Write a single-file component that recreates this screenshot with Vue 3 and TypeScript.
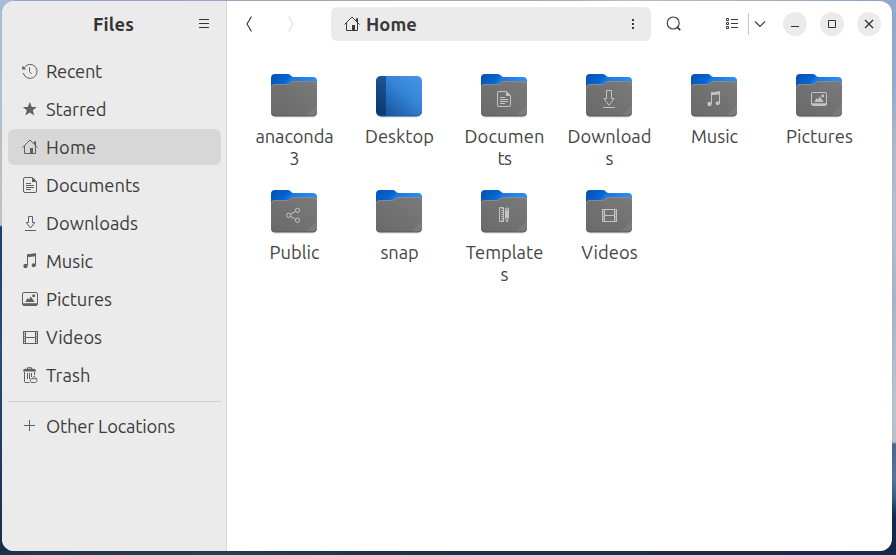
<script setup lang="ts">
import type { Directive } from 'vue'

interface Place { label: string; icon: string; width: number; active?: boolean }
interface Line { text: string; width: number }
interface Item { icon: string; kind: 'folder' | 'desktop'; lines: Line[] }

const places: Place[] = [
  { label: 'Recent', icon: 'recent', width: 56 },
  { label: 'Starred', icon: 'star', width: 60.5 },
  { label: 'Home', icon: 'home', width: 50.5, active: true },
  { label: 'Documents', icon: 'document', width: 94 },
  { label: 'Downloads', icon: 'download', width: 92 },
  { label: 'Music', icon: 'music', width: 47 },
  { label: 'Pictures', icon: 'picture', width: 66 },
  { label: 'Videos', icon: 'video', width: 56 },
  { label: 'Trash', icon: 'trash', width: 44.5 },
]

const items: Item[] = [
  { icon: '', kind: 'folder', lines: [{ text: 'anaconda', width: 78 }, { text: '3', width: 10 }] },
  { icon: '', kind: 'desktop', lines: [{ text: 'Desktop', width: 69 }] },
  { icon: 'document', kind: 'folder', lines: [{ text: 'Documen', width: 80 }, { text: 'ts', width: 14 }] },
  { icon: 'download-large', kind: 'folder', lines: [{ text: 'Download', width: 84 }, { text: 's', width: 8 }] },
  { icon: 'music', kind: 'folder', lines: [{ text: 'Music', width: 47 }] },
  { icon: 'picture', kind: 'folder', lines: [{ text: 'Pictures', width: 67 }] },
  { icon: 'share', kind: 'folder', lines: [{ text: 'Public', width: 50 }] },
  { icon: '', kind: 'folder', lines: [{ text: 'snap', width: 38 }] },
  { icon: 'template', kind: 'folder', lines: [{ text: 'Template', width: 77.5 }, { text: 's', width: 8 }] },
  { icon: 'video', kind: 'folder', lines: [{ text: 'Videos', width: 56.5 }] },
]

// Spreads a label's letters so that it takes the given width.
const vFit: Directive<HTMLElement, number> = {
  mounted(el, { value }) {
    const count = (el.textContent ?? '').trim().length
    if (count < 2) return
    const natural = el.getBoundingClientRect().width
    el.style.letterSpacing = `${((value - natural) / count).toFixed(3)}px`
  },
}
</script>

<template>
  <svg class="defs" width="0" height="0" aria-hidden="true">
    <defs>
      <linearGradient id="tab" x1="0" y1="0" x2="1" y2="0.3">
        <stop offset="0" stop-color="#0550ae" /><stop offset="0.42" stop-color="#0766d2" />
        <stop offset="0.5" stop-color="#1b78e0" /><stop offset="1" stop-color="#2f8cf0" />
      </linearGradient>
      <linearGradient id="front" x1="0" y1="1" x2="1" y2="0">
        <stop offset="0" stop-color="#696969" /><stop offset="1" stop-color="#7a7a7a" />
      </linearGradient>
      <linearGradient id="desk" x1="0" y1="1" x2="1" y2="0">
        <stop offset="0" stop-color="#0d4a8c" /><stop offset="0.6" stop-color="#3584d8" /><stop offset="1" stop-color="#4596e8" />
      </linearGradient>
      <symbol id="i-recent" viewBox="0 0 16 16">
        <path d="M2.100 4.800A7 7 0 1 1 1.300 10" fill="none" stroke="currentColor" />
        <path d="M7.500 4.500v4l2 2.500" fill="none" stroke="currentColor" />
        <path d="M0.200 2.500v4h4z" fill="currentColor" />
      </symbol>
      <symbol id="i-star" viewBox="0 0 16 16">
        <path d="M7.800 1l2 5h5l-4 3.300 1.500 5.200-4.500-3.100-4.500 3.100 1.500-5.200-4-3.300h5z" fill="currentColor" />
      </symbol>
      <symbol id="i-home" viewBox="0 0 16 16">
        <path d="M.5 8.500L8 1l7.500 7.500M2.500 7v7.500h11V7M12.500 5V2.500h1V6" fill="none" stroke="currentColor" />
        <path d="M8 9h3v6H8z" fill="currentColor" />
      </symbol>
      <symbol id="i-document" viewBox="0 0 16 16">
        <path d="M3 .5h7.500l4 4V14a1.500 1.500 0 0 1-1.500 1.500H3A1.500 1.500 0 0 1 1.500 14V2A1.500 1.500 0 0 1 3 .5z" fill="none" stroke="currentColor" />
        <path d="M10 .5V5h4.500z" fill="currentColor" />
        <path d="M4 6.500h5M4 8.500h8M4 10.500h8M4 12.500h5" stroke="currentColor" />
      </symbol>
      <symbol id="i-download" viewBox="0 0 16 16">
        <path d="M6.500 1.500h4v6h2.200l-4.200 5.500-4.200-5.500h2.200zM3 15.500h11" fill="none" stroke="currentColor" />
      </symbol>
      <symbol id="i-download-large" viewBox="0 0 16 16" overflow="visible">
        <path d="M5.500-.5h5v8h2.500L8 14.500 3 7.500h2.500zM2 16.500h12" fill="none" stroke="currentColor" />
      </symbol>
      <symbol id="i-music" viewBox="0 0 16 16">
        <path d="M5.500 12.500V2.500l8-1.500v11" fill="none" stroke="currentColor" />
        <path d="M5 1.300L14 .2v3L5 4.300z" fill="currentColor" />
        <circle cx="3.500" cy="13" r="2.200" fill="currentColor" /><circle cx="11.700" cy="12.300" r="2" fill="currentColor" />
      </symbol>
      <symbol id="i-picture" viewBox="0 0 16 16">
        <rect x=".5" y="1.500" width="15" height="13" rx="1.500" fill="none" stroke="currentColor" />
        <path d="M1 12.300h14v1.700H1zM3.300 11l2.300-4 1.400 1.600 1.700-3.100 4 5.500z" fill="currentColor" />
        <circle cx="11.700" cy="4.700" r="1.500" fill="currentColor" />
      </symbol>
      <symbol id="i-video" viewBox="0 0 16 16">
        <path d="M3.500 2v13M13.500 2v13M3 2.500h11M3 8.500h11M3 14.500h11" stroke="currentColor" />
        <path d="M1.500 2v13M15.500 2v13" stroke="currentColor" />
        <path d="M2.500 2v13M14.500 2v13" stroke="currentColor" stroke-dasharray="1 1.400" />
      </symbol>
      <symbol id="i-trash" viewBox="0 0 16 16">
        <path d="M5.500 2V.7h4V2M2.500 5v9.500a1 1 0 0 0 1 1h4M12.500 5v3M5.500 6v6M7.500 6v6M9.500 6v4" fill="none" stroke="currentColor" />
        <path d="M1 4.500q0-2.700 2-2.700h9q2 0 2 2.700z" fill="currentColor" />
        <path d="M9.500 11.700h5.300q.9 3.600-1.300 3.800H10q-2.600-.2-1-3.800zM10.300 11l2-1.800 1.700 2.300" fill="none" stroke="currentColor" stroke-width=".9" />
      </symbol>
      <symbol id="i-plus" viewBox="0 0 16 16"><path d="M2 7.500h11M7.500 2v11" stroke="currentColor" /></symbol>
      <symbol id="i-share" viewBox="0 0 16 16">
        <g fill="none" stroke="currentColor"><circle cx="2.700" cy="8.300" r="2.100" /><circle cx="11.500" cy="3.300" r="2.100" /><circle cx="11.500" cy="13.200" r="2.100" /><path d="M4.500 7.300l5-2.900M4.500 9.400l5 2.800" /></g>
      </symbol>
      <symbol id="i-template" viewBox="0 0 16 16">
        <path d="M3.500.5h4v14h-4z" fill="none" stroke="currentColor" />
        <path d="M6.200 1v13" stroke="currentColor" stroke-width="1.600" stroke-dasharray="1 1" />
        <path d="M9 2q0-1.500 2-1.500T13 2v9H9z" fill="currentColor" />
        <path d="M9.500 11l1.500 4 1.500-4" fill="none" stroke="currentColor" />
        <path d="M11 1.500v2.500" stroke="#707070" />
      </symbol>
    </defs>
  </svg>

  <div class="desktop">
    <div class="window">
      <aside class="sidebar">
        <header class="side-head">
          <span></span>
          <h1><span v-fit="41">Files</span></h1>
          <svg class="ic dark" viewBox="0 0 16 16"><path d="M3 3.500h10M3 7.500h10M3 11.500h10" stroke="currentColor" /></svg>
        </header>
        <nav class="places">
          <a v-for="p in places" :key="p.label" class="place" :class="{ active: p.active }">
            <svg class="ic"><use :href="'#i-' + p.icon" /></svg>
            <span v-fit="p.width">{{ p.label }}</span>
          </a>
        </nav>
        <div class="rule"></div>
        <nav class="places other">
          <a class="place">
            <svg class="ic"><use href="#i-plus" /></svg>
            <span v-fit="129">Other Locations</span>
          </a>
        </nav>
      </aside>

      <main class="main">
        <header class="toolbar">
          <svg class="ic back" viewBox="0 0 16 16"><path d="M9.500.5L5 8l4.500 7.500" fill="none" stroke="currentColor" stroke-width="1.200" /></svg>
          <svg class="ic forward" viewBox="0 0 16 16"><path d="M5.500.5L10 8l-4.500 7.500" fill="none" stroke="currentColor" stroke-width="1.100" /></svg>
          <div class="pathbar">
            <svg class="ic"><use href="#i-home" /></svg>
            <strong v-fit="51">Home</strong>
            <svg class="ic dots" viewBox="0 0 16 16"><path d="M7 3h2v2H7zM7 7h2v2H7zM7 11h2v2H7z" fill="currentColor" /></svg>
          </div>
          <svg class="ic search" viewBox="0 0 16 16"><circle cx="7.200" cy="7" r="6" fill="none" stroke="currentColor" stroke-width="1.100" /><path d="M11.200 11.200l3 3" stroke="currentColor" stroke-width="1.800" /></svg>
          <svg class="ic list" viewBox="0 0 16 16"><path d="M2.500 2.500h2v2h-2zM2.500 6.500h2v2h-2zM2.500 10.500h2v2h-2z" fill="none" stroke="currentColor" /><path d="M7 3.500h7M7 7.500h7M7 11.500h7" stroke="currentColor" /></svg>
          <span class="split"></span>
          <svg class="ic" viewBox="0 0 16 16"><path d="M3 5.500l5 5 5-5" fill="none" stroke="currentColor" stroke-width="1.200" /></svg>
          <div class="controls">
            <button><svg class="ic" viewBox="0 0 16 16"><path d="M4 10.500h8" stroke="currentColor" /></svg></button>
            <button><svg class="ic" viewBox="0 0 16 16"><path d="M4.500 4.500h7v7h-7z" fill="none" stroke="currentColor" /></svg></button>
            <button><svg class="ic" viewBox="0 0 16 16"><path d="M4 4l8 8M12 4l-8 8" stroke="currentColor" stroke-width="1.300" /></svg></button>
          </div>
        </header>

        <section class="grid">
          <div v-for="item in items" :key="item.lines[0].text" class="item">
            <svg v-if="item.kind === 'folder'" class="folder" viewBox="0 0 48 48">
              <rect x="1.500" y="12" width="45" height="33.500" rx="4" fill="#000" opacity=".16" />
              <path d="M1 17V6q0-4 4-4h13c2.500 0 3 3 5.500 3H43q4 0 4 4v8z" fill="url(#tab)" />
              <path d="M1 16q0-4 4-4h12.500c3 0 3-3 6-3H43q4 0 4 4v27q0 4.300-4 4.300H5q-4 0-4-4.300z" fill="url(#front)" />
              <path d="M1.500 15.500q.3-3 3.500-3h12.500c3 0 3-3 6-3H43q3 0 3.500 3" fill="none" stroke="#929292" stroke-width=".7" />
              <path d="M47 33v7q0 4.300-4 4.300h-7.500z" fill="#fff" opacity=".07" />
              <path d="M1.500 41q.5 2.900 3.500 2.900h38q3 0 3.500-2.900" fill="none" stroke="#585858" stroke-width=".8" />
              <use v-if="item.icon" class="emblem" :href="'#i-' + item.icon" x="16" y="19" width="16" height="16" />
            </svg>
            <svg v-else class="folder" viewBox="0 0 48 48">
              <rect x="1.500" y="6" width="45" height="39.500" rx="5" fill="#000" opacity=".16" />
              <rect x="1" y="4" width="46" height="40.300" rx="5" fill="url(#desk)" />
              <path d="M11 4H6Q1 4 1 9v30.300q0 5 5 5h5z" fill="#00183c" opacity=".42" />
              <path d="M1.500 40q.8 3.900 4.500 3.900h36q3.700 0 4.500-3.900" fill="none" stroke="#1d5ca3" stroke-width=".8" />
            </svg>
            <div class="label">
              <div v-for="line in item.lines" :key="line.text"><span v-fit="line.width">{{ line.text }}</span></div>
            </div>
          </div>
        </section>
      </main>
    </div>
  </div>
</template>

<style>
body { overflow: hidden; }
</style>

<style scoped>
.defs { position: absolute; }
.desktop {
  box-sizing: border-box;
  width: 896px;
  height: 555px;
  padding: 1px 4px 4px 2px;
  background:
    linear-gradient(90deg, #20354c, #263c50 25%, #1b3049 50%, #152b4c) 0 100% / 100% 4px no-repeat,
    linear-gradient(#aabbd6, #b2c2da 125px, #bcbfca 135px, #c3c4cc 225px, #1b4074 227px, #264d7b 350px, #203d62 450px, #182d4b) 0 0 / 14px 100% no-repeat,
    linear-gradient(#8fa8d0, #96acd0 90px, #b0b9ca 150px, #b5bfcd 230px, #a3b4ca 300px, #bcc3cc 400px, #b7c0cc 442px, #4b678c 444px, #55769e 480px, #33587a 500px, #152a4d 515px, #14284a) 100% 0 / 14px 100% no-repeat,
    linear-gradient(90deg, #9dadcb, #a4b0c8 60%, #c6c2c4 70%, #91a9d0) 0 0 / 100% 20px no-repeat,
    #182d4b;
  font-family: Ubuntu, "Open Sans", "Noto Sans", sans-serif;
  font-size: 18.33px;
  color: #3d3d3d;
}
.window {
  display: flex;
  height: 550px;
  overflow: hidden;
  border-radius: 12px;
  background: #fff;
  box-shadow: 0 0 1px rgba(0, 0, 0, 0.35);
}
.sidebar {
  box-sizing: border-box;
  flex: none;
  width: 225px;
  border-right: 1px solid #d8d8d8;
  background: #ebebeb;
}
.side-head {
  display: grid;
  grid-template-columns: 44px 1fr 44px;
  align-items: center;
  justify-items: center;
  height: 46px;
}
h1 { margin: 0; padding-right: 1px; font-size: 18.33px; font-weight: 700; line-height: 22px; color: #333; white-space: nowrap; }
.ic { display: block; flex: none; width: 16px; height: 16px; }
.dark { color: #333; }
.places { display: flex; flex-direction: column; gap: 2px; padding: 6px 5px 0 6px; }
.place {
  display: flex;
  align-items: center;
  gap: 8px;
  height: 36px;
  padding-left: 14px;
  border-radius: 6px;
  white-space: nowrap;
}
.place .ic { color: #606060; }
.active { background: #d7d7d7; }
.rule { height: 1px; margin: 8px 5px 0 6px; background: #cfcfcf; }
.other { padding-top: 6px; }
.main { flex: 1; min-width: 0; }
.toolbar { display: flex; align-items: center; height: 46px; padding-left: 15px; color: #3a3a3a; }
.forward { margin-left: 25px; color: #dedede; }
.pathbar {
  box-sizing: border-box;
  display: flex;
  align-items: center;
  width: 320px;
  height: 34px;
  margin-left: 32px;
  padding: 0 10px 0 13px;
  border-radius: 6px;
  background: #ebebeb;
}
.pathbar strong { margin-left: 6px; line-height: 22px; }
.dots { margin-left: auto; }
.search { margin-left: 15px; }
.list { margin-left: 42px; }
.split { width: 1px; height: 22px; margin: 0 3px 0 8px; background: #c8c8c8; }
.controls { display: flex; gap: 13px; margin-left: 15px; }
button {
  display: grid;
  place-items: center;
  width: 24px;
  height: 24px;
  padding: 0;
  border: 0;
  border-radius: 50%;
  background: #ebebeb;
  color: #333;
}
.grid {
  display: grid;
  grid-template-columns: repeat(6, 105px);
  grid-auto-rows: 97px;
  row-gap: 19px;
  padding: 25px 0 0 14.5px;
}
.item { display: flex; flex-direction: column; align-items: center; }
.folder { display: block; width: 48px; height: 48px; }
.emblem { color: #c4c4c4; }
.label { margin-top: 5px; padding-left: 1px; line-height: 22px; color: #454545; text-align: center; white-space: nowrap; }
</style>
